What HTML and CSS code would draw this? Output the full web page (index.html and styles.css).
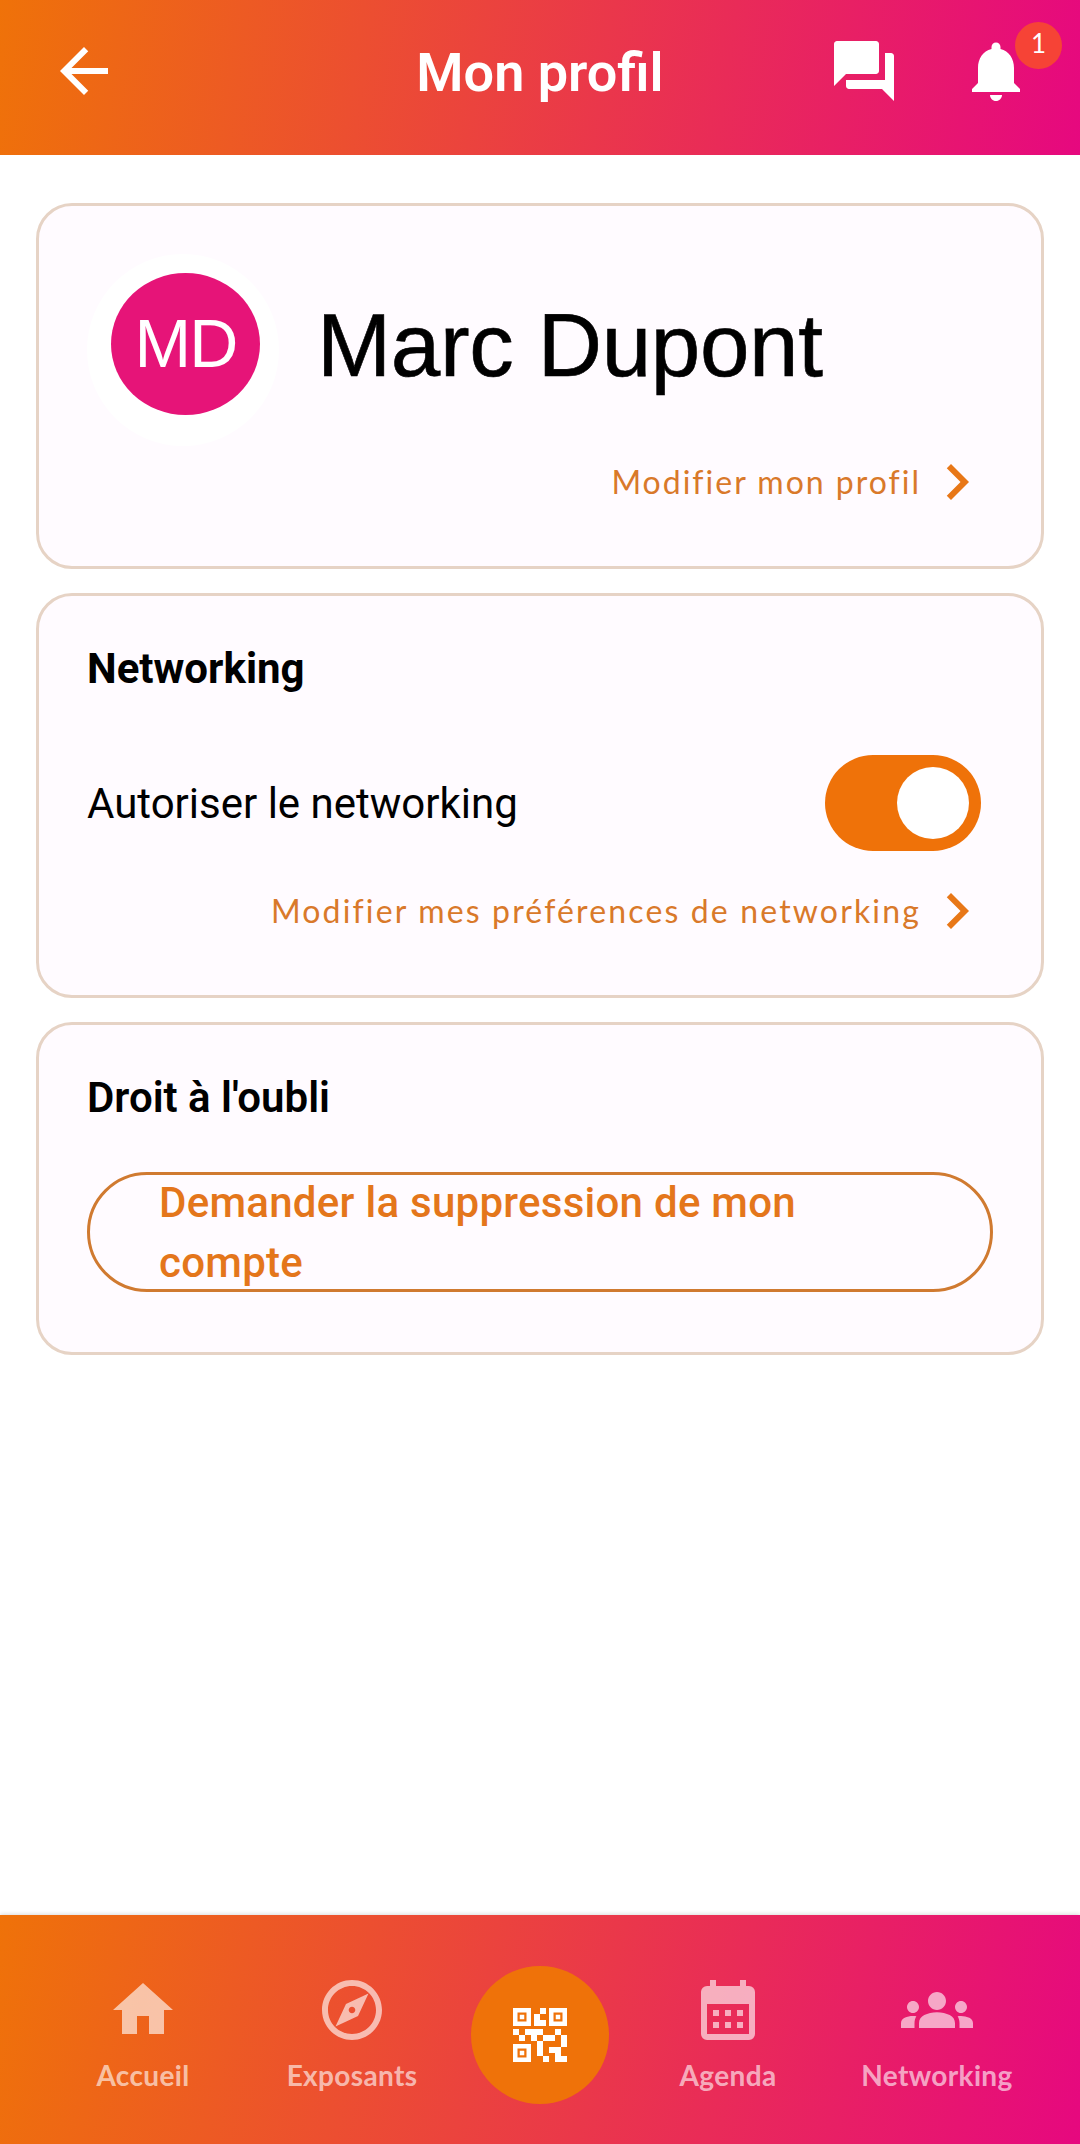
FILE: index.html
```html
<!DOCTYPE html>
<html lang="fr">
<head>
    <meta charset="UTF-8">
    <meta name="viewport" content="width=device-width, initial-scale=1.0">
    <title>Mon profil</title>
    <link rel="stylesheet" href="styles.css">
</head>
<body>
    <header class="topbar">
        <a class="back" href="#" aria-label="Retour">
            <svg class="icon" viewBox="0 0 24 24"><path d="M20 11H7.83l5.59-5.59L12 4l-8 8 8 8 1.41-1.41L7.83 13H20v-2z"/></svg>
        </a>
        <h1>Mon profil</h1>
        <div class="actions">
            <svg class="icon" viewBox="0 0 24 24"><path d="M21 6h-2v9H6v2c0 .55.45 1 1 1h11l4 4V7c0-.55-.45-1-1-1zm-4 6V3c0-.55-.45-1-1-1H3c-.55 0-1 .45-1 1v14l4-4h10c.55 0 1-.45 1-1z"/></svg>
            <div class="bell">
                <svg class="icon" viewBox="0 0 24 24"><path d="M12 22c1.1 0 2-.9 2-2h-4c0 1.1.89 2 2 2zm6-6v-5c0-3.07-1.64-5.64-4.5-6.32V4c0-.83-.67-1.5-1.5-1.5s-1.5.67-1.5 1.5v.68C7.63 5.36 6 7.92 6 11v5l-2 2v1h16v-1l-2-2z"/></svg>
                <span class="badge">1</span>
            </div>
        </div>
    </header>

    <main class="content">
        <section class="card">
            <div class="profile">
                <div class="avatar"><div class="initials">MD</div></div>
                <div class="name">Marc Dupont</div>
            </div>
            <a class="link" href="#">
                <span class="link-profile">Modifier mon profil</span>
                <svg class="icon" viewBox="0 0 24 24"><path d="M10 6 8.59 7.41 13.17 12l-4.58 4.59L10 18l6-6z"/></svg>
            </a>
        </section>

        <section class="card">
            <h2>Networking</h2>
            <div class="setting">
                <span>Autoriser le networking</span>
                <div class="toggle"><div class="knob"></div></div>
            </div>
            <a class="link" href="#">
                <span class="link-prefs">Modifier mes préférences de networking</span>
                <svg class="icon" viewBox="0 0 24 24"><path d="M10 6 8.59 7.41 13.17 12l-4.58 4.59L10 18l6-6z"/></svg>
            </a>
        </section>

        <section class="card">
            <h2 class="medium">Droit à l'oubli</h2>
            <button class="delete">Demander la suppression de mon compte</button>
        </section>
    </main>

    <nav class="tabs">
        <a class="tab" href="#">
            <svg class="icon" viewBox="0 0 24 24"><path d="M10 20v-6h4v6h5v-8h3L12 3 2 12h3v8z"/></svg>
            <span>Accueil</span>
        </a>
        <a class="tab" href="#">
            <svg class="icon" viewBox="0 0 24 24"><path d="M12 2C6.48 2 2 6.48 2 12s4.48 10 10 10 10-4.48 10-10S17.52 2 12 2zm0 18c-4.41 0-8-3.59-8-8s3.59-8 8-8 8 3.59 8 8-3.59 8-8 8zm-5.5-2.5 7.51-3.49L17.5 6.5 9.99 9.99 6.5 17.5zm5.5-6.6c.61 0 1.1.49 1.1 1.1s-.49 1.1-1.1 1.1-1.1-.49-1.1-1.1.49-1.1 1.1-1.1z"/></svg>
            <span>Exposants</span>
        </a>
        <a class="scan" href="#" aria-label="Scanner">
            <svg class="icon" viewBox="0 0 24 24"><path d="M15 21h-2v-2h2v2zM13 14h-2v5h2v-5zM21 12h-2v4h2v-4zM19 10h-2v2h2v-2zM7 12H5v2h2v-2zM5 10H3v2h2v-2zM12 5h2V3h-2v2zM4.5 4.5v3h3v-3h-3zM9 9H3V3h6v6zM4.5 16.5v3h3v-3h-3zM9 21H3v-6h6v6zM16.5 4.5v3h3v-3h-3zM21 9h-6V3h6v6zM19 19v-3h-4v2h2v3h4v-2h-2zM17 12h-4v2h4v-2zM13 10H7v2h2v2h2v-2h2v-2zM14 9V7h-2V5h-2v4h4zM6.75 5.25h-1.5v1.5h1.5v-1.5zM6.75 17.25h-1.5v1.5h1.5v-1.5zM18.75 5.25h-1.5v1.5h1.5v-1.5z" fill-rule="evenodd"/></svg>
        </a>
        <a class="tab" href="#">
            <svg class="icon" viewBox="0 0 24 24"><path d="M19 4h-1V2h-2v2H8V2H6v2H5a2 2 0 0 0-2 2v14a2 2 0 0 0 2 2h14a2 2 0 0 0 2-2V6a2 2 0 0 0-2-2zm0 16H5V10h14v10zM7 12h2v2H7zM11 12h2v2h-2zM15 12h2v2h-2zM7 16h2v2H7zM11 16h2v2h-2zM15 16h2v2h-2z" fill-rule="evenodd"/></svg>
            <span>Agenda</span>
        </a>
        <a class="tab" href="#">
            <svg class="icon" viewBox="0 0 24 24"><path d="M12 12.75c1.63 0 3.07.39 4.24.9 1.08.48 1.76 1.56 1.76 2.73V18H6v-1.61c0-1.18.68-2.26 1.76-2.73 1.17-.52 2.61-.91 4.24-.91zM4 13c1.1 0 2-.9 2-2s-.9-2-2-2-2 .9-2 2 .9 2 2 2zm1.13 1.1c-.37-.06-.74-.1-1.13-.1-.99 0-1.93.21-2.78.58A2.01 2.01 0 0 0 0 16.43V18h4.5v-1.61c0-.83.23-1.61.63-2.29zM20 13c1.1 0 2-.9 2-2s-.9-2-2-2-2 .9-2 2 .9 2 2 2zm4 3.43c0-.81-.48-1.53-1.22-1.85A6.95 6.95 0 0 0 20 14c-.39 0-.76.04-1.13.1.4.68.63 1.46.63 2.29V18H24v-1.57zM12 6c1.66 0 3 1.34 3 3s-1.34 3-3 3-3-1.34-3-3 1.34-3 3-3z"/></svg>
            <span>Networking</span>
        </a>
    </nav>
</body>
</html>
```

FILE: styles.css
```css
* {
    box-sizing: border-box;
}

body {
    margin: 0;
    min-height: 2144px;
    display: flex;
    flex-direction: column;
    background-color: #fff;
    color: #000;
    font-family: Roboto, Arial, sans-serif;
    font-size: 42px;
}

a {
    color: inherit;
    text-decoration: none;
}

.icon {
    display: block;
    width: 72px;
    height: 72px;
    fill: currentColor;
    flex-shrink: 0;
}

/* Header */
.topbar {
    height: 155px;
    padding: 0 48px 13px;
    display: grid;
    grid-template-columns: 1fr auto 1fr;
    align-items: center;
    background: linear-gradient(98deg, #ef7209, #e6087f);
    color: #fff;
}

h1 {
    margin: 0;
    padding-top: 3px;
    font-size: 54px;
    font-weight: 600;
    line-height: 72px;
}

.actions {
    display: flex;
    justify-content: flex-end;
    gap: 60px;
}

.bell {
    position: relative;
}

.badge {
    position: absolute;
    top: -13px;
    right: -30px;
    width: 47px;
    height: 47px;
    border-radius: 50%;
    background-color: #f64336;
    font-family: Lato, sans-serif;
    font-size: 26px;
    line-height: 43px;
    text-align: center;
}

/* Cards */
.content {
    flex: 1;
    padding: 48px 36px;
    display: flex;
    flex-direction: column;
    gap: 24px;
}

.card {
    padding: 48px;
    border: 3px solid #e6d3c5;
    border-radius: 36px;
    background-color: #fffbff;
}

.profile {
    display: flex;
    align-items: center;
}

.avatar {
    width: 192px;
    height: 192px;
    padding: 19px 18px 0 24px;
    border-radius: 50%;
    background-color: #fff;
}

.initials {
    width: 149px;
    height: 142px;
    border-radius: 50%;
    background-color: #e61478;
    color: #fff;
    font-family: "Liberation Sans", Arial, sans-serif;
    font-size: 68px;
    letter-spacing: -2px;
    line-height: 141px;
    text-align: center;
}

.name {
    margin-left: 38px;
    padding-bottom: 11px;
    font-family: "Liberation Sans", Arial, sans-serif;
    font-size: 89px;
    letter-spacing: -0.35px;
    line-height: 100px;
    -webkit-text-stroke: 0.6px #000;
}

.link {
    display: flex;
    align-items: center;
    justify-content: flex-end;
    color: #e87717;
    font-family: Lato, sans-serif;
    font-size: 32px;
}

.link span {
    padding-bottom: 1px;
    color: #d9792a;
}

.link-profile {
    letter-spacing: 2px;
}

.link-prefs {
    letter-spacing: 2.15px;
}

h2 {
    margin: 0 0 38px;
    padding-top: 1px;
    font-size: 42px;
    font-weight: 700;
    line-height: 48px;
}

h2.medium {
    margin-bottom: 50px;
    font-weight: 600;
}

.setting {
    height: 144px;
    padding-right: 12px;
    display: flex;
    align-items: center;
    justify-content: space-between;
}

.toggle {
    width: 156px;
    height: 96px;
    padding: 12px;
    display: flex;
    justify-content: flex-end;
    border-radius: 48px;
    background-color: #ef7209;
}

.knob {
    width: 72px;
    height: 72px;
    border-radius: 50%;
    background-color: #fff;
}

.delete {
    width: 100%;
    height: 120px;
    margin-bottom: 12px;
    padding: 2px 69px 0;
    display: flex;
    align-items: center;
    border: 3px solid #d07a30;
    border-radius: 60px;
    background: none;
    color: #e4761b;
    font: 500 42px/60px Roboto, Arial, sans-serif;
    letter-spacing: 0.27px;
    text-align: left;
}

/* Bottom navigation */
.tabs {
    height: 229px;
    padding: 0 38px;
    display: grid;
    grid-template-columns: 210px 208px 168px 208px 210px;
    background: linear-gradient(102deg, #ef7209, #e6087f);
    box-shadow: 0 -1px 4px rgba(0, 0, 0, 0.15);
}

.tab {
    padding-top: 59px;
    display: flex;
    flex-direction: column;
    align-items: center;
    gap: 11px;
    color: rgba(255, 255, 255, 0.62);
    font-family: Lato, sans-serif;
    font-size: 28px;
    font-weight: 700;
    letter-spacing: 0.35px;
    line-height: 36px;
}

.scan {
    width: 138px;
    height: 138px;
    margin: 51px auto 0;
    display: flex;
    align-items: center;
    justify-content: center;
    border-radius: 50%;
    background-color: #ef7209;
    color: #fff;
}
```
